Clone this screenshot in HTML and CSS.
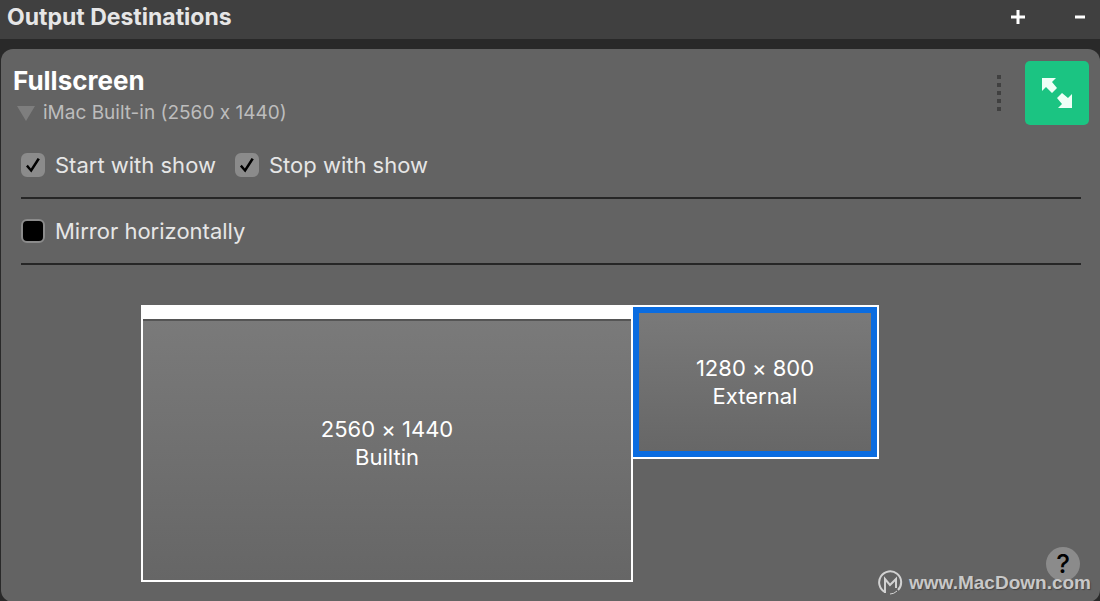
FILE: index.html
```
<!DOCTYPE html>
<html lang="en">
<head>
  <meta charset="UTF-8">
  <title>Output Destinations</title>
  <link rel="stylesheet" href="styles.css">
</head>
<body>

  <!-- Title bar -->
  <header class="topbar">
    <h1>Output Destinations</h1>
    <div class="topbar-actions">
      <button type="button" aria-label="Add destination">
        <svg width="14" height="14" viewBox="0 0 14 14"><path d="M0 7h14M7 0v14" stroke="#fff" stroke-width="3"/></svg>
      </button>
      <button type="button" aria-label="Remove destination">
        <svg width="10" height="14" viewBox="0 0 10 14"><path d="M0 7h10" stroke="#fff" stroke-width="3"/></svg>
      </button>
    </div>
  </header>

  <!-- Destination -->
  <main class="panel">
    <div class="panel-head">
      <div class="panel-title">
        <h2>Fullscreen</h2>
        <button type="button" class="device">
          <svg width="18" height="15" viewBox="0 0 18 15"><path d="M0 0h18L9 15z" fill="#7e7e7e"/></svg>
          iMac Built-in (2560 x 1440)
        </button>
      </div>
      <svg class="grip" width="4" height="36" viewBox="0 0 4 36"><path d="M0 0h4v4H0zM0 8h4v4H0zM0 16h4v4H0zM0 24h4v4H0zM0 32h4v4H0z" fill="#404040"/></svg>
      <button type="button" class="expand" aria-label="Go fullscreen">
        <svg width="64" height="64" viewBox="0 0 64 64" fill="#effff6">
          <path d="M17 17H31L27 21L32 27L27 32L21 26L17 30z"/>
          <path d="M47 47H33L37 43L32 37L37 32L43 37L47 33z"/>
        </svg>
      </button>
    </div>

    <div class="options">
      <label><input type="checkbox" checked>Start with show</label>
      <label><input type="checkbox" checked>Stop with show</label>
    </div>
    <div class="options">
      <label><input type="checkbox">Mirror horizontally</label>
    </div>

    <!-- Screen layout -->
    <div class="screens">
      <button type="button" class="screen builtin">
        <span>2560 × 1440</span>
        <span>Builtin</span>
      </button>
      <button type="button" class="screen external">
        <span>1280 × 800</span>
        <span>External</span>
      </button>
    </div>
  </main>

  <button type="button" class="help" aria-label="Help">?</button>
  <div class="watermark">
    <svg width="26" height="26" viewBox="0 0 26 26" fill="none" stroke="#d2d2d2" stroke-width="2">
      <path d="M8 22A11 11 0 1 1 21 20"/>
      <path d="M20 21Q17 24 13 24" stroke-width="1"/>
      <path d="M8 23V9L13 15L19 9V18"/>
    </svg>
    <span>www.MacDown.com</span>
  </div>

</body>
</html>
```
FILE: styles.css
```
* { margin: 0; padding: 0; box-sizing: border-box; }
body {
  font-family: 'Inter', sans-serif;
  font-feature-settings: "calt" 0;
  background: #292929;
  color: #e6e6e6;
  min-height: 100vh;
  display: flex;
  flex-direction: column;
}
button {
  border: none;
  background: none;
  color: inherit;
  font: inherit;
  font-feature-settings: inherit;
  cursor: pointer;
}
svg { display: block; }

.topbar {
  display: flex;
  align-items: center;
  justify-content: space-between;
  height: 39px;
  padding: 0 15px 6px 7px;
  background: #404040;
}
.topbar h1 { font-size: 23px; line-height: 28px; font-weight: 700; }
.topbar-actions { display: flex; gap: 50px; }

.panel {
  flex: 1;
  margin: 10px 0 0 1px;
  padding: 12px 19px 20px 20px;
  background: #636363;
  border-radius: 12px;
}
.panel-head {
  display: flex;
  align-items: flex-start;
  margin: 0 -8px;
}
.panel-title { flex: 1; }
.panel-title h2 { font-size: 26px; line-height: 40px; font-weight: 700; color: #fff; }
.device {
  display: flex;
  align-items: center;
  gap: 8px;
  padding-left: 4px;
  font-size: 19px;
  line-height: 24px;
  color: #bdbdbd;
}
.grip { margin: 14px 24px 0 0; }
.expand { background: #1bc482; border-radius: 5px; }

.options {
  display: flex;
  gap: 19px;
  height: 66px;
  padding-top: 18px;
  border-bottom: 2px solid #262626;
}
.panel-head + .options { height: 74px; padding-top: 26px; }
.options label {
  display: flex;
  align-items: center;
  gap: 10px;
  font-size: 22px;
  line-height: 28px;
  height: 28px;
}
.options input {
  appearance: none;
  width: 24px;
  height: 24px;
  border: 2px solid #8b8b8b;
  border-radius: 6px;
  background: #000;
}
.options input:checked {
  background: #8b8b8b;
  display: grid;
  place-items: center;
}
.options input:checked::before {
  content: "";
  width: 14px;
  height: 15px;
  background: #000;
  clip-path: polygon(0 60%, 13% 49%, 35% 74%, 83% 3%, 99% 12%, 38% 100%);
}

.screens {
  display: grid;
  grid-template-columns: 2fr 1fr;
  align-items: start;
  margin: 40px 202px 0 120px;
}
.screen {
  display: flex;
  flex-direction: column;
  align-items: center;
  justify-content: center;
  border: 2px solid #fff;
  background: linear-gradient(#7a7a7a, #666);
  color: #fff;
  font-size: 22px;
  line-height: 28px;
}
.builtin {
  aspect-ratio: 16 / 9;
  padding-bottom: 12px;
  border-top-width: 14px;
  box-shadow: inset 0 2px #555;
}
.external {
  aspect-ratio: 16 / 10;
  border-left: none;
  box-shadow: inset 0 0 0 6px #0a6ce0;
}

/* Floating over the panel */
.help {
  position: absolute;
  right: 20px;
  bottom: 20px;
  width: 34px;
  height: 34px;
  border-radius: 50%;
  background: #8b8b8b;
  color: #000;
  font-size: 26px;
  font-weight: 500;
  line-height: 34px;
}
.watermark {
  position: absolute;
  right: 9px;
  bottom: 5px;
  display: flex;
  align-items: center;
  gap: 6px;
  font: bold 19px/26px 'Liberation Sans', sans-serif;
  color: #c8c8c8;
  text-shadow: 1px 1px 1px #444;
}
```
